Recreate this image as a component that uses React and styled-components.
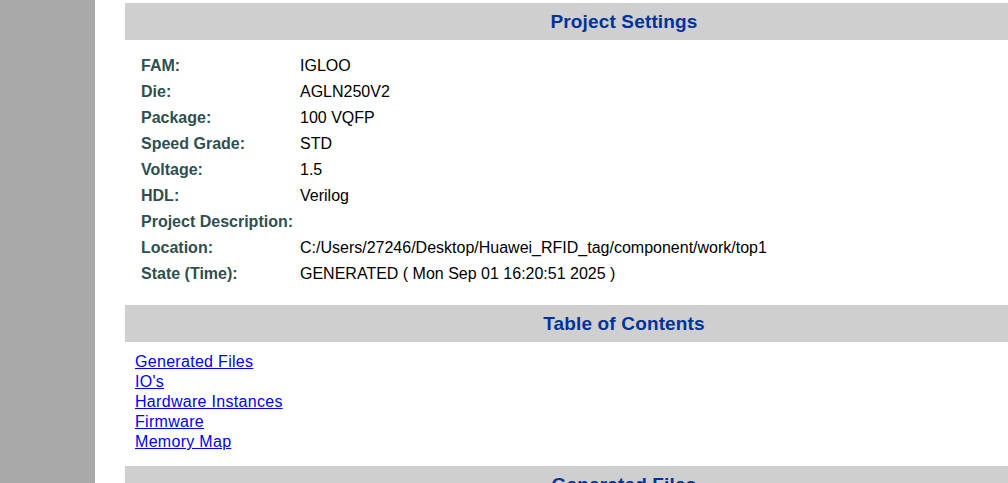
import React from 'react'
import styled, { createGlobalStyle } from "styled-components";

const settings = [
    ["FAM:", "IGLOO"],
    ["Die:", "AGLN250V2"],
    ["Package:", "100 VQFP"],
    ["Speed Grade:", "STD"],
    ["Voltage:", "1.5"],
    ["HDL:", "Verilog"],
    ["Project Description:", ""],
    ["Location:", "C:/Users/27246/Desktop/Huawei_RFID_tag/component/work/top1"],
    ["State (Time):", "GENERATED ( Mon Sep 01 16:20:51 2025 )"],
];

const contents = ["Generated Files", "IO's", "Hardware Instances", "Firmware", "Memory Map"];

const App = () => {
    return (
        <Page>
            <GlobalStyle />
            <Sidebar />
            <Main>
                <SectionHeader>Project Settings</SectionHeader>
                <SettingsTable>
                    {settings.map(([label, value]) => (
                        <Row key={label}>
                            <Label>{label}</Label>
                            <Value>{value}</Value>
                        </Row>
                    ))}
                </SettingsTable>

                <SectionHeader>Table of Contents</SectionHeader>
                <LinkList>
                    {contents.map((c) => (
                        <Link key={c} href='#'>{c}</Link>
                    ))}
                </LinkList>

                <SectionHeader>Generated Files</SectionHeader>
            </Main>
        </Page>
    )
}

const GlobalStyle = createGlobalStyle`
body{
    margin:0;
    background:#fff;
    overflow:hidden;
    font-family:"Liberation Sans", Arial, sans-serif;
}
`;

const Page = styled.div`
display:flex;
align-items:flex-start;
height:483px;
overflow:hidden;
`;

const Sidebar = styled.div`
flex:0 0 95px;
align-self:stretch;
background:#a9a9a9;
`;

const Main = styled.div`
flex:0 0 auto;
display:flex;
flex-direction:column;
padding:3px 0 0 30px;
`;

const SectionHeader = styled.div`
flex-shrink:0;
width:998px;
height:37px;
display:flex;
align-items:center;
justify-content:center;
background:#cfcfcf;
color:#003399;
font-size:19px;
font-weight:700;
letter-spacing:0.15px;
`;

const SettingsTable = styled.div`
flex-shrink:0;
display:flex;
flex-direction:column;
padding:13px 0 18px 16px;
`;

const Row = styled.div`
display:flex;
align-items:center;
height:26px;
font-size:16px;
`;

const Label = styled.div`
width:159px;
font-weight:700;
color:#2f4f4f;
white-space:nowrap;
`;

const Value = styled.div`
color:#000;
white-space:nowrap;
`;

const LinkList = styled.div`
flex-shrink:0;
display:flex;
flex-direction:column;
align-items:flex-start;
padding:10px 0 14px 10px;
`;

const Link = styled.a`
font-size:16px;
line-height:20px;
color:#0000ff;
letter-spacing:0.3px;
text-decoration:underline;
`;

export default App;
